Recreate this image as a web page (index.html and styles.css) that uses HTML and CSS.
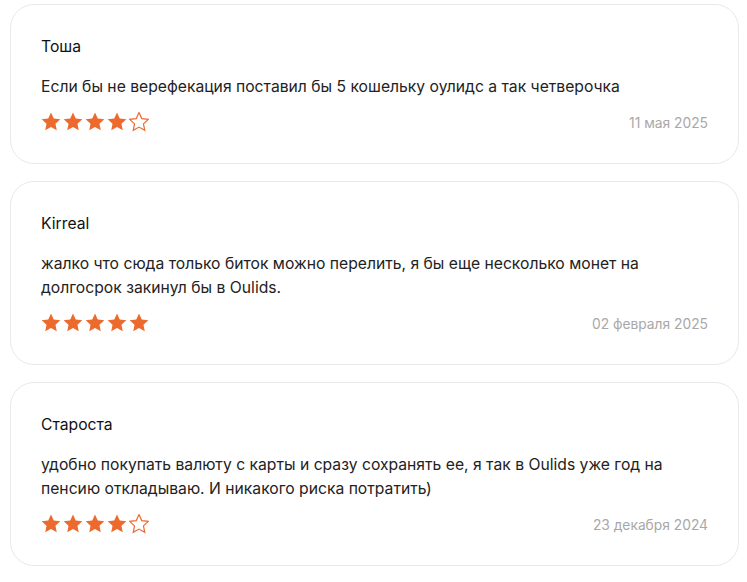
FILE: index.html
```html
<!DOCTYPE html>
<html lang="ru">
<head>
  <meta charset="UTF-8" />
  <meta name="viewport" content="width=device-width, initial-scale=1.0" />
  <title>Отзывы</title>
  <link rel="stylesheet" href="styles.css">
</head>
<body>
  <svg width="0" height="0" class="defs">
    <defs>
      <path id="star" d="M10 0.6L12.76 6.6L19.32 7.37L14.47 11.85L15.76 18.33L10 15.1L4.24 18.33L5.53 11.85L0.68 7.37L7.24 6.6Z" />
    </defs>
  </svg>

  <div class="reviews">
    <div class="review">
      <div class="review-name">Тоша</div>
      <p class="review-text">Если бы не верефекация поставил бы 5 кошельку оулидс а так четверочка</p>
      <div class="review-footer">
        <div class="stars">
          <svg class="star"><use href="#star" /></svg>
          <svg class="star"><use href="#star" /></svg>
          <svg class="star"><use href="#star" /></svg>
          <svg class="star"><use href="#star" /></svg>
          <svg class="star empty"><use href="#star" /></svg>
        </div>
        <span class="review-date">11 мая 2025</span>
      </div>
    </div>

    <div class="review">
      <div class="review-name">Kirreal</div>
      <p class="review-text">жалко что сюда только биток можно перелить, я бы еще несколько монет на долгосрок закинул бы в Oulids.</p>
      <div class="review-footer">
        <div class="stars">
          <svg class="star"><use href="#star" /></svg>
          <svg class="star"><use href="#star" /></svg>
          <svg class="star"><use href="#star" /></svg>
          <svg class="star"><use href="#star" /></svg>
          <svg class="star"><use href="#star" /></svg>
        </div>
        <span class="review-date">02 февраля 2025</span>
      </div>
    </div>

    <div class="review">
      <div class="review-name">Староста</div>
      <p class="review-text">удобно покупать валюту с карты и сразу сохранять ее, я так в Oulids уже год на пенсию откладываю. И никакого риска потратить)</p>
      <div class="review-footer">
        <div class="stars">
          <svg class="star"><use href="#star" /></svg>
          <svg class="star"><use href="#star" /></svg>
          <svg class="star"><use href="#star" /></svg>
          <svg class="star"><use href="#star" /></svg>
          <svg class="star empty"><use href="#star" /></svg>
        </div>
        <span class="review-date">23 декабря 2024</span>
      </div>
    </div>
  </div>
</body>
</html>
```

FILE: styles.css
```css
:root {
  --star: #ec6a2e;
  --border: #e9e9e9;
  --muted: #a8a8a8;
}
* {
  box-sizing: border-box;
  margin: 0;
  padding: 0;
}
body {
  font-family: Inter, "Noto Sans", sans-serif;
  background-color: #fff;
  color: #222;
}
.defs {
  position: absolute;
}
.reviews {
  display: flex;
  flex-direction: column;
  gap: 17px;
  padding: 4px 8px 0 10px;
}
.review {
  border: 1px solid var(--border);
  border-radius: 24px;
  padding: 30px 30px 31px;
}
.review-name {
  font-size: 15.7px;
  line-height: 24px;
  color: #111;
  margin-bottom: 16px;
}
.review-text {
  font-size: 15.7px;
  line-height: 24px;
  color: #222;
  max-width: 640px;
}
.review-footer {
  display: flex;
  align-items: center;
  justify-content: space-between;
  margin-top: 13px;
}
.stars {
  display: flex;
  gap: 2px;
}
.star {
  width: 20px;
  height: 20px;
  fill: var(--star);
}
.star.empty {
  fill: none;
  stroke: var(--star);
  stroke-width: 1.2;
}
.review-date {
  font-size: 13.8px;
  color: var(--muted);
  padding-top: 2px;
}
```
